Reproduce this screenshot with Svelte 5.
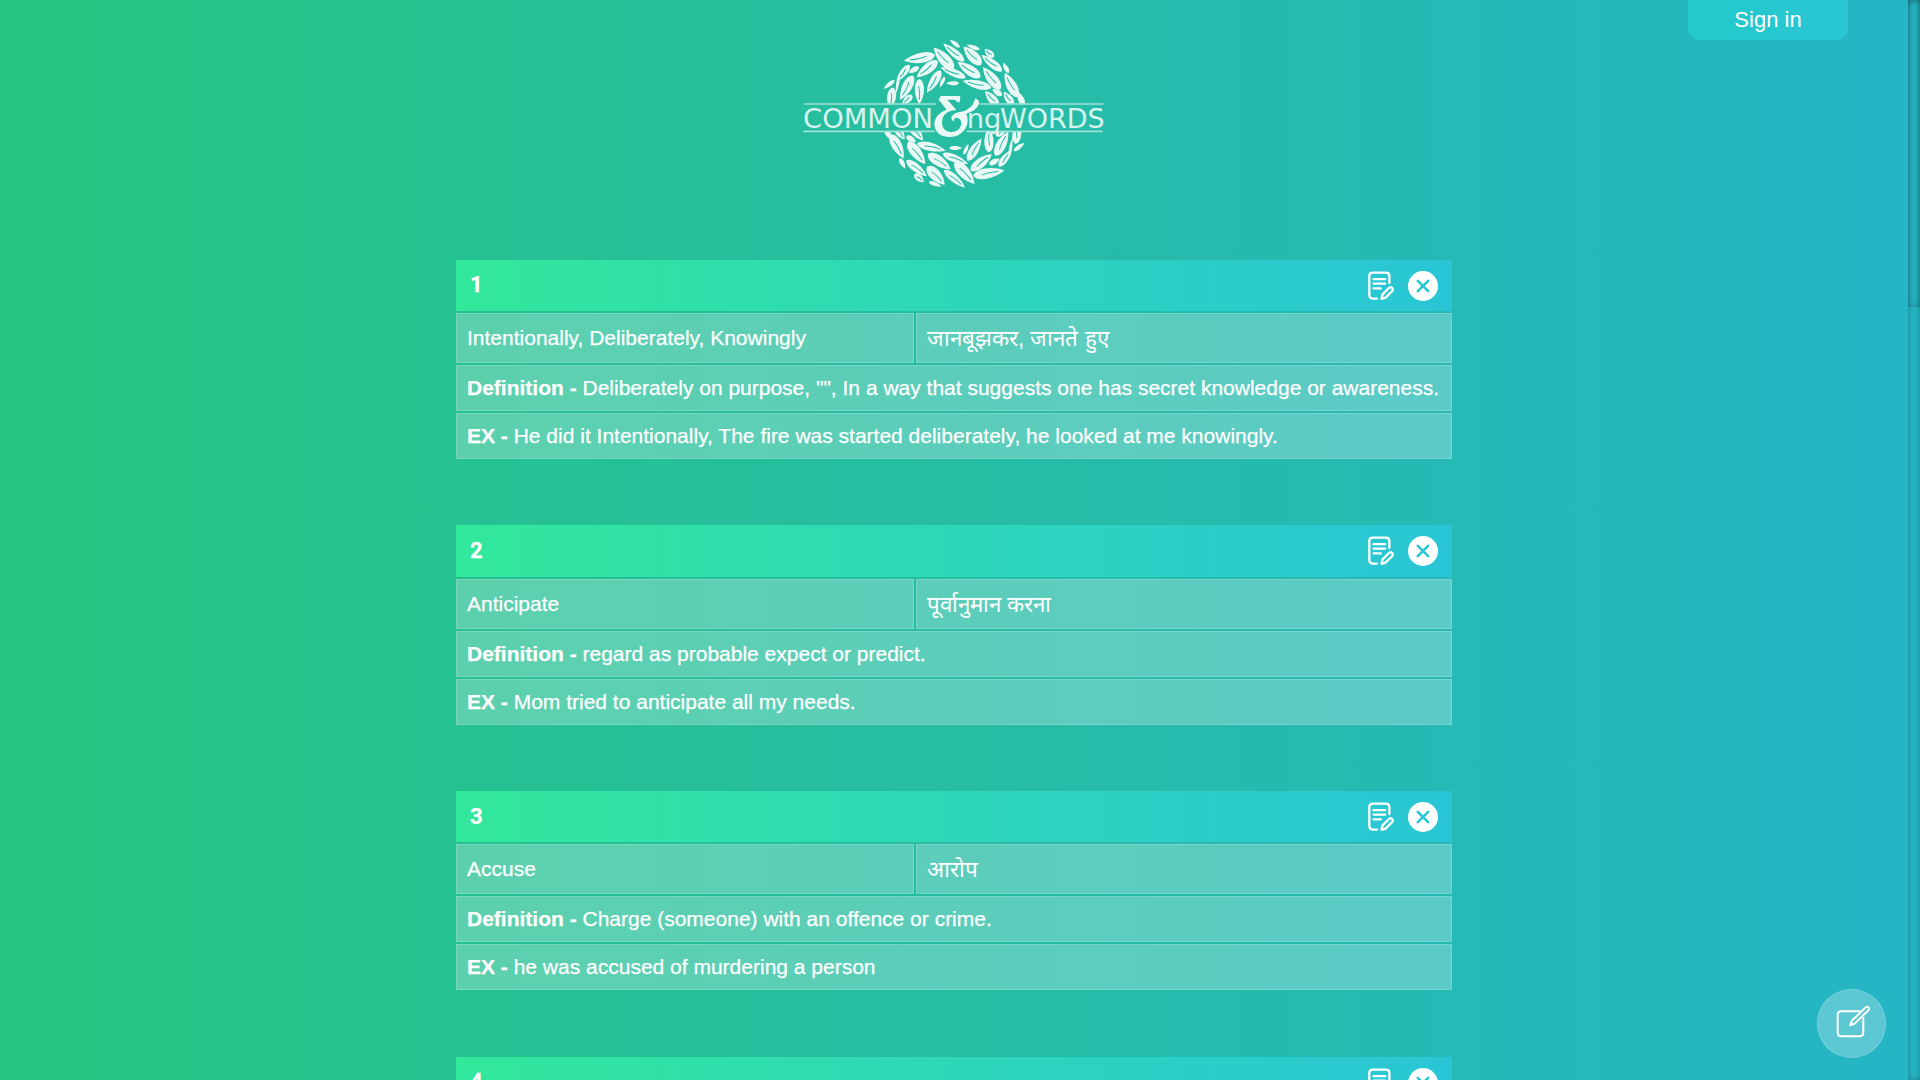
<script>
  const words = [
    { n: 1, en: 'Intentionally, Deliberately, Knowingly', hi: 'जानबूझकर, जानते हुए', def: 'Deliberately on purpose, "", In a way that suggests one has secret knowledge or awareness.', ex: 'He did it Intentionally, The fire was started deliberately, he looked at me knowingly.' },
    { n: 2, en: 'Anticipate', hi: 'पूर्वानुमान करना', def: 'regard as probable expect or predict.', ex: 'Mom tried to anticipate all my needs.' },
    { n: 3, en: 'Accuse', hi: 'आरोप', def: 'Charge (someone) with an offence or crime.', ex: 'he was accused of murdering a person' },
    { n: 4 }
  ];

  // Leaves of one half of the wreath: centre x, centre y, length, width, angle.
  // Coordinates are thirds of a pixel inside the 990x510 logo canvas.
  const tip = [495, 41, 36, 12, 218];
  const leaves = [
    [390, 84, 92, 30, 170], [462, 86, 86, 33, 228], [492, 68, 80, 23, 220], [412, 116, 78, 29, 142],
    [548, 78, 74, 32, 226], [550, 52, 40, 12, 200], [598, 70, 36, 20, 222],
    [606, 100, 76, 24, 218], [648, 114, 34, 13, 242], [538, 120, 80, 30, 214], [490, 128, 80, 22, 202],
    [606, 146, 82, 31, 232], [664, 166, 80, 30, 242], [562, 163, 86, 25, 194], [432, 154, 76, 26, 122],
    [457, 156, 34, 10, 115], [488, 160, 38, 12, 180], [340, 128, 60, 21, 128], [372, 119, 34, 16, 150],
    [350, 172, 80, 29, 118], [388, 184, 74, 27, 90], [298, 163, 40, 12, 142], [304, 204, 64, 26, 98],
    [352, 208, 38, 20, 140], [323, 160, 60, 9, 100], [622, 187, 34, 16, 212], [606, 206, 58, 25, 228],
    [656, 206, 48, 22, 235], [693, 208, 46, 18, 248]
  ];
  // Rounded at the stem, tapering to a point at the tip.
  const leafPath = (l, w) =>
    `M${-l / 2} 0C${-l * 0.42} ${-w * 0.6} ${l * 0.1} ${-w * 0.78} ${l * 0.53} 0C${l * 0.18} ${w * 0.62} ${-l * 0.38} ${w * 0.72} ${-l / 2} 0Z`;
</script>

{#snippet half(list)}
  {#each list as [x, y, l, w, a]}
    <g transform="translate({x} {y}) rotate({a})">
      <path d={leafPath(l, w)} fill="#e9f8f5" />
      {#if w > 19}
        <path d="M{-l * 0.22} 2Q0 -3 {l * 0.34} 0" class="vein" />
      {/if}
    </g>
  {/each}
{/snippet}

<div class="page">
  <main>
    <button class="signin">Sign in</button>

    <svg class="logo" width="330" height="170" viewBox="0 0 990 510">
      <defs>
        <clipPath id="upper"><rect x="0" y="0" width="990" height="221" /></clipPath>
        <clipPath id="lower"><rect x="0" y="0" width="990" height="209" /></clipPath>
      </defs>
      <g clip-path="url(#upper)">{@render half([tip, ...leaves])}</g>
      <g transform="rotate(180 492.5 257)"><g clip-path="url(#lower)">{@render half(leaves)}</g></g>
      <path d="M42 222H438M570 222H940M40 304H434M530 304H938" class="rule" />
      <text x="39" y="295" textLength="390" lengthAdjust="spacingAndGlyphs" class="name">COMMON</text>
      <text x="530" y="295" textLength="104" lengthAdjust="spacingAndGlyphs" class="name">ng</text>
      <text x="630" y="293" textLength="314" lengthAdjust="spacingAndGlyphs" class="name">WORDS</text>
      <path class="amp" d="M452 198H511L509 217H501Q500 209 490 209H472L499 240Q466 242 458 264Q450 292 470 303Q488 311 504 300Q516 289 513 274Q508 262 498 263Q488 267 494 275Q483 272 484 262Q490 248 510 246Q534 242 548 224Q554 211 556 205Q570 211 567 223Q558 243 529 251Q538 272 527 295Q510 322 476 321Q438 319 433 286Q432 253 470 239L446 209Z" />
    </svg>

    <div class="list">
      {#each words as w}
        <section class="card">
          <header>
            <b>{w.n}</b>
            <div class="tools">
              <svg width="28" height="30" viewBox="0 0 28 30" class="line note">
                <path d="M9 27.6H5.2Q1.3 27.6 1.3 23.8V5Q1.3 1.7 5.2 1.7H17.6Q21.4 1.7 21.4 5V12M5.5 8.2H17.2M5.5 12.6H17.2M5.5 17.3H12.8" />
                <path d="M13.5 27.8L14.5 23.4L21.2 16.8Q22.8 15.6 24.2 17Q25.5 18.5 24.2 20L17.6 26.6Z" />
              </svg>
              <svg width="30" height="30" viewBox="0 0 30 30">
                <circle cx="15" cy="15" r="15" fill="#fff" />
                <path d="M9.8 9.8L20.2 20.2M20.2 9.8L9.8 20.2" class="cross" />
              </svg>
            </div>
          </header>
          {#if w.en}
            <div class="pair">
              <div class="cell">{w.en}</div>
              <div class="cell hindi">{w.hi}</div>
            </div>
            <div class="cell"><b>Definition -</b> {w.def}</div>
            <div class="cell"><b>EX -</b> {w.ex}</div>
          {/if}
        </section>
      {/each}
    </div>
  </main>

  <div class="track"><div class="thumb"></div></div>

  <button class="compose" aria-label="Add word">
    <svg width="34" height="34" viewBox="0 0 34 34" class="line">
      <path d="M23.5 6.3H5.5Q1.7 6.3 1.7 10V27.5Q1.7 31.3 5.5 31.3H23.5Q27.3 31.3 27.3 27.5V13" />
      <path d="M14.2 20.2L15.8 15.8L29.6 2.4Q31.2 1 32.5 2.4Q33.8 3.8 32.4 5.3L18.6 18.6Z" />
    </svg>
  </button>
</div>

<style>
  :global(body) { overflow: hidden; }
  .page {
    display: flex;
    width: 1920px;
    height: 1080px;
    overflow: hidden;
    position: relative;
    color: #fff;
    font-family: 'Liberation Sans', Arial, sans-serif;
    background: linear-gradient(90deg, #26c580, #26bda4 50%, #26b5c6);
  }
  main {
    flex: 1;
    display: flex;
    flex-direction: column;
    align-items: center;
  }
  .signin {
    align-self: flex-end;
    width: 160px;
    height: 40px;
    margin-right: 60px;
    padding: 0;
    border: 0;
    border-radius: 0 0 12px 12px;
    background: linear-gradient(90deg, #22cac9, #2ac5d5);
    color: #fff;
    font: 22px 'Liberation Sans', Arial, sans-serif;
    flex: none;
  }
  .logo { margin: -10px 0 59.8px 2px; flex: none; }
  .vein { fill: none; stroke: #26bda8; stroke-width: 3; }
  .rule { stroke: #9fe2d6; stroke-width: 5; }
  .name { font: 82px 'DejaVu Sans', sans-serif; fill: #d8f4ef; }
  .amp { fill: #e9f8f5; }
  .list {
    display: flex;
    flex-direction: column;
    gap: 66.37px;
    width: 996px;
  }
  .card { display: flex; flex-direction: column; gap: 2px; flex: none; }
  .card:last-child { height: 199.3px; }
  header {
    display: flex;
    align-items: center;
    justify-content: space-between;
    height: 51.3px;
    padding: 0 14px;
    font: 22px Roboto, sans-serif;
    background: linear-gradient(90deg, #32e89b, #29c5d6);
  }
  header b { margin-top: -1.2px; -webkit-text-stroke: 0.3px #fff; }
  .tools { display: flex; align-items: center; gap: 12px; padding-top: 0.6px; }
  .tools svg { display: block; }
  .line { fill: none; stroke: #fff; stroke-width: 2; stroke-linejoin: round; stroke-linecap: round; }
  .note { stroke-width: 2.3; }
  .cross { stroke: #29c6d2; stroke-width: 2.6; stroke-linecap: round; }
  .pair { display: grid; grid-template-columns: 458px 536px; gap: 2px; height: 50px; }
  .cell {
    box-sizing: border-box;
    height: 46px;
    padding: 0 10px;
    border: 1px solid rgba(255, 255, 255, 0.18);
    background: rgba(255, 255, 255, 0.25);
    font-size: 21px;
    line-height: 44px;
    white-space: nowrap;
    -webkit-text-stroke: 0.25px #fff;
  }
  .pair .cell { height: 50px; line-height: 48px; }
  .pair .hindi { font-size: 22.4px; line-height: 50px; -webkit-text-stroke: 0; }
  .track { width: 12px; height: 1080px; box-shadow: inset 0 0 6px rgba(0, 0, 0, 0.3); }
  .thumb { height: 307px; box-shadow: inset 0 0 6px rgba(0, 0, 0, 0.3); }
  .compose {
    position: absolute;
    left: 1817px;
    top: 989px;
    width: 69px;
    height: 69px;
    display: grid;
    place-items: center;
    padding: 0 0 3px 2px;
    border: 1px solid rgba(255, 255, 255, 0.18);
    border-radius: 50%;
    background: rgba(255, 255, 255, 0.25);
  }
</style>
